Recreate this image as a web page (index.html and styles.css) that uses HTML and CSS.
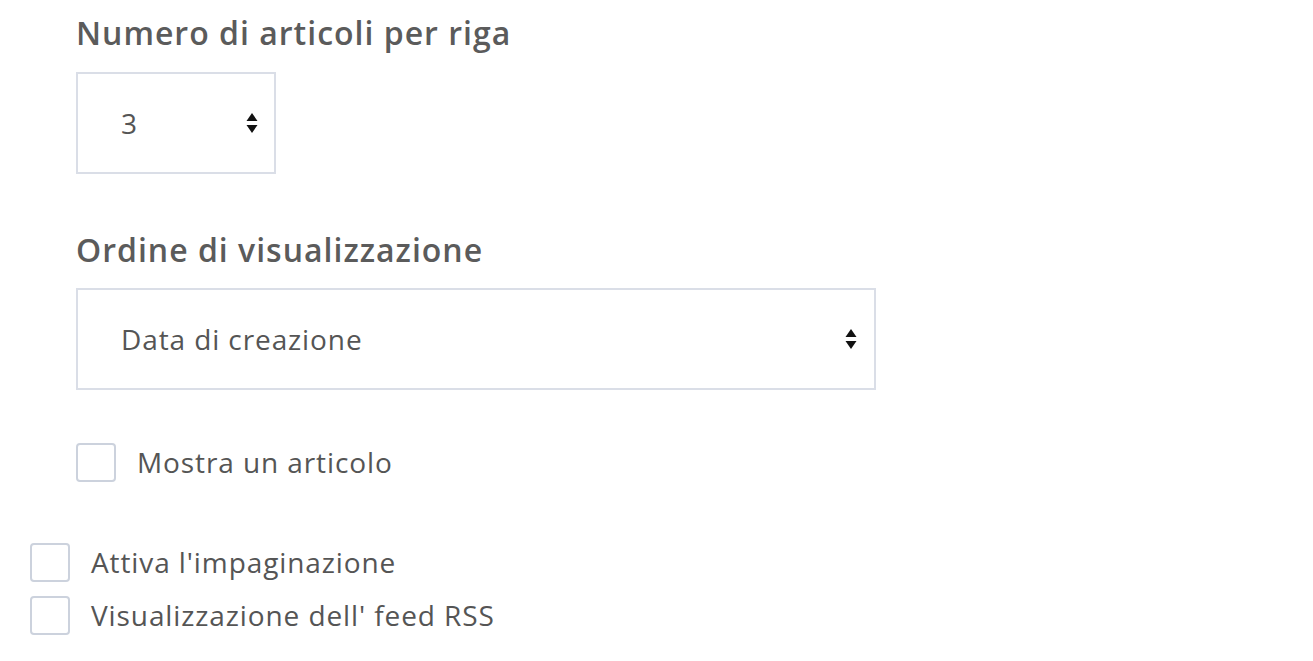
FILE: index.html
```html
<!DOCTYPE html>
<html lang="it">
<head>
  <meta charset="UTF-8">
  <title>Impostazioni articoli</title>
  <link rel="stylesheet" href="styles.css">
</head>
<body>
  <div class="settings">
    <div class="sub">
      <h2 class="field-title">Numero di articoli per riga</h2>
      <div class="select small">
        <span>3</span>
        <svg class="arrows" width="12" height="24" viewBox="0 0 12 24"><path d="M6 2 L11.5 10 H0.5 Z M0.5 14 H11.5 L6 22 Z" fill="#111"/></svg>
      </div>

      <h2 class="field-title second">Ordine di visualizzazione</h2>
      <div class="select wide">
        <span>Data di creazione</span>
        <svg class="arrows" width="12" height="24" viewBox="0 0 12 24"><path d="M6 2 L11.5 10 H0.5 Z M0.5 14 H11.5 L6 22 Z" fill="#111"/></svg>
      </div>

      <label class="check first">
        <span class="box"></span>
        <span>Mostra un articolo</span>
      </label>
    </div>

    <div class="checks">
      <label class="check">
        <span class="box"></span>
        <span>Attiva l'impaginazione</span>
      </label>
      <label class="check">
        <span class="box"></span>
        <span>Visualizzazione dell' feed RSS</span>
      </label>
    </div>
  </div>
</body>
</html>
```

FILE: styles.css
```css
body {
  margin: 0;
  background: #fff;
  font-family: "Open Sans", "Noto Sans", sans-serif;
  color: #555;
}
.settings { padding: 13px 0 0 30px; }
.sub { padding-left: 46px; }
.field-title {
  margin: 0 0 19px;
  font-size: 32px; line-height: 40px;
  font-weight: 600; color: #5b5b5b;
  letter-spacing: 1px;
}
.field-title.second { margin-top: 56px; margin-bottom: 18px; }
.select {
  box-sizing: border-box;
  height: 102px;
  border: 2px solid #dadee7;
  display: flex; align-items: center; justify-content: space-between;
  padding: 0 16px 0 43px;
  font-size: 28px; letter-spacing: 0.9px;
  color: #555;
}
.select.small { width: 200px; }
.select.wide { width: 800px; padding-right: 17px; }
.arrows { display: block; }
.check {
  display: flex; align-items: center;
  gap: 21px;
  font-size: 28px; line-height: 39px;
  letter-spacing: 0.9px;
}
.check.first { margin-top: 53px; }
.box {
  box-sizing: border-box;
  width: 40px; height: 39px;
  border: 2px solid #ccd2dd;
  border-radius: 4px;
  flex-shrink: 0;
}
.checks {
  margin-top: 61px;
  display: flex; flex-direction: column; gap: 14px;
}
```
